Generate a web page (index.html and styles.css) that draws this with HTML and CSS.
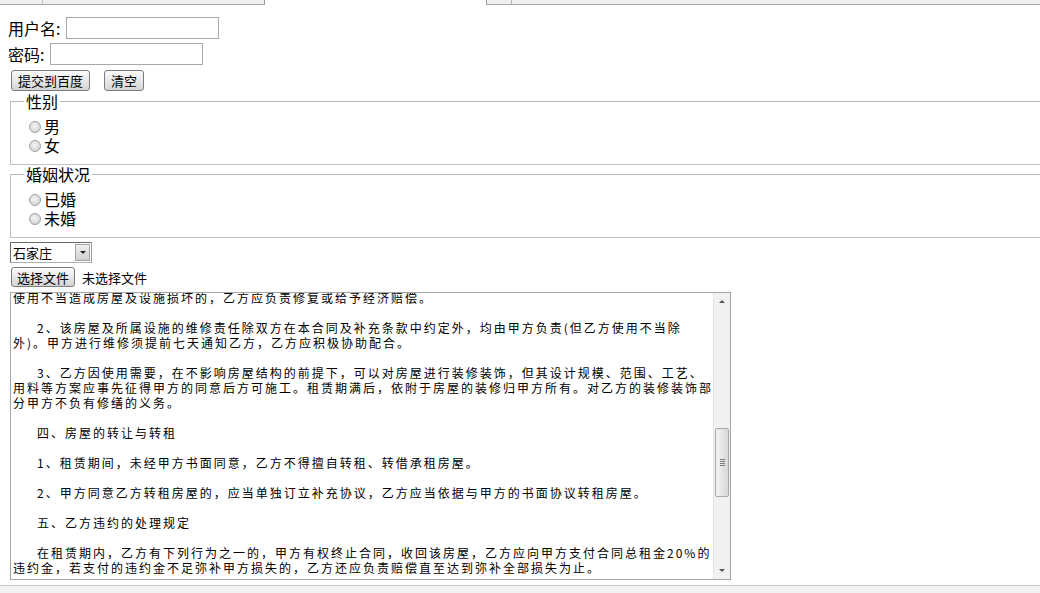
FILE: index.html
```html
<!DOCTYPE html>
<html lang="zh-CN">
<head>
    <meta charset="UTF-8">
    <title>表单</title>
    <link rel="stylesheet" href="styles.css">
</head>
<body>

    <div class="tabs">
        <div class="tab tab-left"><span class="tab-sep"></span></div>
        <div class="tab-gap"></div>
        <div class="tab tab-right"><span class="tab-sep"></span></div>
    </div>

    <div class="page">
        <form id="regForm">
            <div class="row">
                <label for="username" class="lbl">用户名:</label>
                <input type="text" id="username" class="text-input">
            </div>
            <div class="row">
                <label for="password" class="lbl">密码:</label>
                <input type="password" id="password" class="text-input">
            </div>
            <div class="row buttons">
                <button type="submit" class="btn">提交到百度</button>
                <button type="reset" class="btn btn-clear">清空</button>
            </div>

            <fieldset class="group">
                <legend>性别</legend>
                <label class="opt"><input type="radio" name="sex" class="radio">男</label>
                <label class="opt"><input type="radio" name="sex" class="radio">女</label>
            </fieldset>

            <fieldset class="group">
                <legend>婚姻状况</legend>
                <label class="opt"><input type="radio" name="marry" class="radio">已婚</label>
                <label class="opt"><input type="radio" name="marry" class="radio">未婚</label>
            </fieldset>

            <div class="select">
                <span class="select-text">石家庄</span>
                <span class="select-arrow"><span class="tri"></span></span>
            </div>

            <div class="file-row">
                <button type="button" class="btn btn-file">选择文件</button>
                <span class="file-name">未选择文件</span>
            </div>

            <div class="textarea">
                <div class="ta-text">
                    <div class="ta-scroll">
                        <p>使用不当造成房屋及设施损坏的，乙方应负责修复或给予经济赔偿。</p>
                        <p class="ind">2、该房屋及所属设施的维修责任除双方在本合同及补充条款中约定外，均由甲方负责(但乙方使用不当除<br>外)。甲方进行维修须提前七天通知乙方，乙方应积极协助配合。</p>
                        <p class="ind">3、乙方因使用需要，在不影响房屋结构的前提下，可以对房屋进行装修装饰，但其设计规模、范围、工艺、<br>用料等方案应事先征得甲方的同意后方可施工。租赁期满后，依附于房屋的装修归甲方所有。对乙方的装修装饰部<br>分甲方不负有修缮的义务。</p>
                        <p class="ind">四、房屋的转让与转租</p>
                        <p class="ind">1、租赁期间，未经甲方书面同意，乙方不得擅自转租、转借承租房屋。</p>
                        <p class="ind">2、甲方同意乙方转租房屋的，应当单独订立补充协议，乙方应当依据与甲方的书面协议转租房屋。</p>
                        <p class="ind">五、乙方违约的处理规定</p>
                        <p class="ind">在租赁期内，乙方有下列行为之一的，甲方有权终止合同，收回该房屋，乙方应向甲方支付合同总租金20%的<br>违约金，若支付的违约金不足弥补甲方损失的，乙方还应负责赔偿直至达到弥补全部损失为止。</p>
                    </div>
                </div>
                <div class="scrollbar">
                    <div class="sb-btn"><span class="tri-up"></span></div>
                    <div class="sb-track">
                        <div class="sb-thumb"><span class="grip"></span></div>
                    </div>
                    <div class="sb-btn"><span class="tri-down"></span></div>
                </div>
            </div>
        </form>
    </div>

    <div class="hbar"></div>

</body>
</html>
```

FILE: styles.css
```css
body {
    margin: 0;
    font-family: "Noto Sans CJK SC", "Liberation Sans", sans-serif;
    font-size: 16px;
    color: #000;
    background-color: #fff;
    overflow: hidden;
    height: 593px;
}

/* strip of the browser chrome at the top */
.tabs {
    display: flex;
    height: 5px;
}
.tab {
    position: relative;
    background-color: #efefef;
    border-bottom: 1px solid #a8a8a8;
    box-sizing: border-box;
}
.tab-left {
    width: 265px;
    border-right: 1px solid #9a9a9a;
}
.tab-left .tab-sep {
    position: absolute;
    left: 42px;
    top: 0;
    height: 4px;
    border-left: 1px solid #c4c4c4;
}
.tab-gap {
    width: 221px;
}
.tab-right {
    flex: 1;
    border-left: 1px solid #9a9a9a;
}
.tab-right .tab-sep {
    position: absolute;
    left: 24px;
    top: 0;
    height: 4px;
    border-left: 1px solid #b4b4b4;
}

.page {
    padding: 12px 8px 0;
}

.row {
    display: flex;
    align-items: center;
    height: 22px;
    margin-bottom: 4px;
}
.lbl {
    margin-right: 6px;
    line-height: 22px;
}
.text-input {
    width: 153px;
    height: 22px;
    box-sizing: border-box;
    border: 1px solid #a9a9a9;
    padding: 0 2px;
    margin: 0;
    font-size: 13px;
}

.row.buttons {
    height: 21px;
    margin-top: 5px;
    margin-bottom: 0;
    padding-left: 3px;
}
.btn {
    height: 21px;
    box-sizing: border-box;
    padding: 0 6px;
    margin: 0;
    font-family: "Noto Sans CJK SC", sans-serif;
    font-size: 13px;
    line-height: 18px;
    white-space: nowrap;
    color: #000;
    background: linear-gradient(#fbfbfb, #e6e6e6 55%, #d4d4d4);
    border: 1px solid #7c7c7c;
    border-radius: 3px;
}
.btn-clear {
    margin-left: 14px;
}

.group {
    margin: 1px -8px 0 2px;
    padding: 7px 12px 9px;
    border: 1px solid #c0c0c0;
    border-top-color: #b8b8b8;
    border-right: none;
}
.group + .group {
    margin-top: 0;
}
.group legend {
    padding: 0 2px;
    margin-left: 1px;
    font-size: 16px;
    line-height: 18px;
}
.opt {
    display: flex;
    align-items: center;
    height: 19px;
    line-height: 19px;
}
.radio {
    appearance: none;
    -webkit-appearance: none;
    width: 12px;
    height: 12px;
    margin: 0 3px 0 6px;
    border: 1px solid #a2a2a2;
    border-radius: 50%;
    background: radial-gradient(circle at 45% 40%, #f4f4f4, #d6d6d6 70%, #c6c6c6);
}

.select {
    display: flex;
    align-items: center;
    width: 82px;
    height: 21px;
    box-sizing: border-box;
    margin: 4px 0 0 2px;
    border: 1px solid #6b6b6b;
    border-right-color: #9c9c9c;
    border-bottom-color: #b0b0b0;
    background-color: #fff;
}
.select-text {
    flex: 1;
    padding-left: 2px;
    font-size: 13px;
    line-height: 19px;
}
.select-arrow {
    display: flex;
    align-items: center;
    justify-content: center;
    width: 15px;
    height: 17px;
    margin-right: 1px;
    box-sizing: border-box;
    border: 1px solid #a4a4a4;
    background: linear-gradient(#f0f0f0, #cfcfcf);
}
.tri {
    width: 0;
    height: 0;
    border-left: 3px solid transparent;
    border-right: 3px solid transparent;
    border-top: 3px solid #222;
}

.file-row {
    display: flex;
    align-items: center;
    height: 20px;
    margin-top: 4px;
    padding-left: 3px;
}
.btn-file {
    height: 20px;
    padding: 0 5px;
    line-height: 17px;
}
.file-name {
    margin-left: 7px;
    font-size: 13px;
}

.textarea {
    display: flex;
    width: 721px;
    height: 288px;
    box-sizing: border-box;
    margin: 5px 0 0 2px;
    border: 1px solid #a6a6a6;
    background-color: #fff;
}
.ta-text {
    flex: 1;
    overflow: hidden;
    padding-left: 2px;
}
.ta-scroll {
    margin-top: -3px;
    font-size: 12px;
    letter-spacing: 2px;
    line-height: 15px;
    white-space: nowrap;
}
.ta-scroll p {
    margin: 0 0 15px;
}
.ta-scroll p.ind {
    text-indent: 24px;
}

.scrollbar {
    display: flex;
    flex-direction: column;
    width: 16px;
    background-color: #f1f1f1;
    border-left: 1px solid #e4e4e4;
}
.sb-btn {
    display: flex;
    align-items: center;
    justify-content: center;
    height: 17px;
}
.tri-up, .tri-down {
    width: 0;
    height: 0;
    border-left: 3px solid transparent;
    border-right: 3px solid transparent;
}
.tri-up {
    border-bottom: 3px solid #555;
}
.tri-down {
    border-top: 3px solid #555;
}
.sb-track {
    flex: 1;
    padding-top: 118px;
}
.sb-thumb {
    display: flex;
    align-items: center;
    justify-content: center;
    height: 69px;
    margin: 0 1px;
    box-sizing: border-box;
    border: 1px solid #a9a9a9;
    border-radius: 2px;
    background: linear-gradient(90deg, #f2f2f2, #d8d8d8);
}
.grip {
    width: 5px;
    height: 7px;
    background: repeating-linear-gradient(#7d7d7d 0 1px, transparent 1px 2px);
}

/* window scrollbar edge at the bottom */
.hbar {
    position: fixed;
    left: 0;
    right: 0;
    bottom: 0;
    height: 7px;
    border-top: 1px solid #c6c6c6;
    background-color: #f3f3f3;
}
```
